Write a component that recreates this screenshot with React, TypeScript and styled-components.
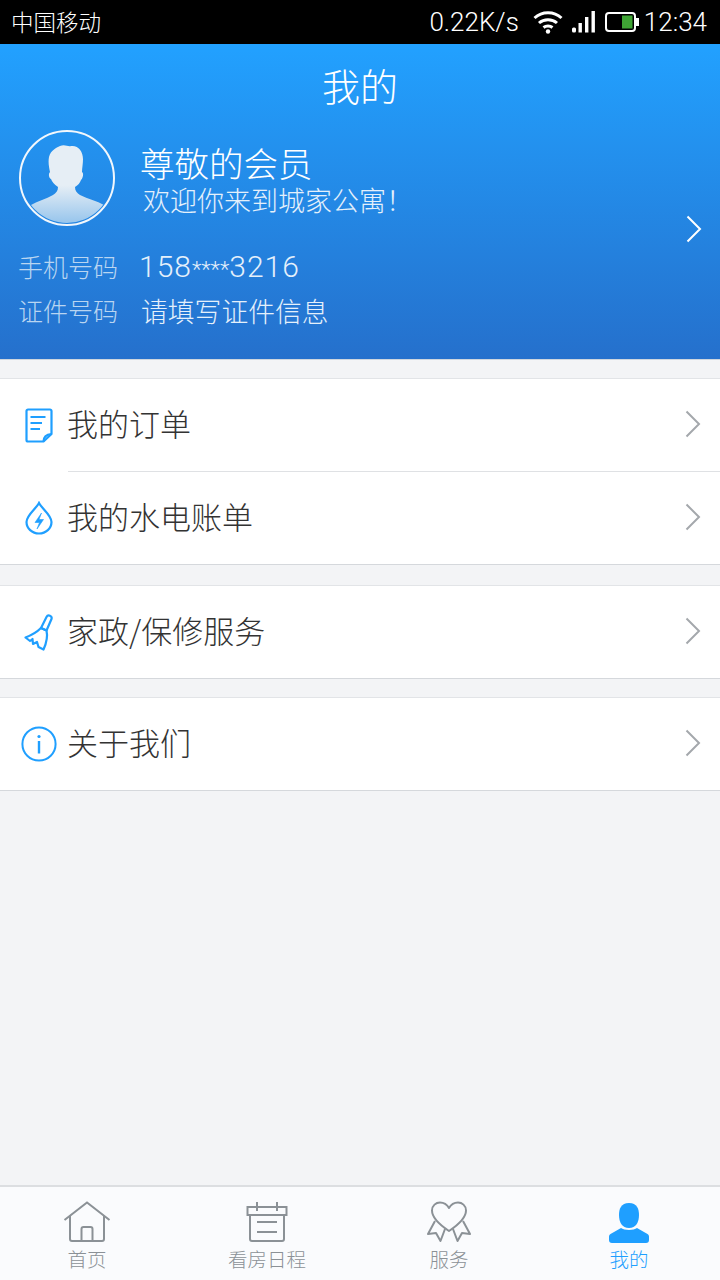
import { FC, ReactNode } from 'react'
import styled, { createGlobalStyle } from 'styled-components'

const GlobalStyle = createGlobalStyle`
  html, body {
    margin: 0;
    padding: 0;
    background: #f3f4f6;
  }
  * {
    box-sizing: border-box;
  }
`

const FONT = `"Noto Sans CJK SC", "Noto Sans", sans-serif`

const ChevronRight: FC<{ color: string }> = ({ color }) => (
  <svg width="16" height="28" viewBox="0 0 16 28" fill="none">
    <path d="M1.5 1.5 L14 14 L1.5 26.5" stroke={color} strokeWidth="2" />
  </svg>
)

const OrderIcon = () => (
  <svg width="28" height="35" viewBox="0 0 28 35" fill="none" stroke="#1f9fff" strokeWidth="2.2" strokeLinejoin="round">
    <path d="M3 1.5 H25 A1.5 1.5 0 0 1 26.5 3 V26 L18.5 33.5 H3 A1.5 1.5 0 0 1 1.5 32 V3 A1.5 1.5 0 0 1 3 1.5 Z" />
    <path d="M18.5 33.5 C18.5 29 21 26.5 26.5 26" />
    <path d="M5.5 9 H20.5 M5.5 15 H17 M5.5 21 H15" />
  </svg>
)

const WaterIcon = () => (
  <svg width="28" height="34" viewBox="0 0 28 34" fill="none" stroke="#1f9fff" strokeWidth="2.2">
    <path d="M14 2 C17 8 26.5 14 26.5 21 A12.5 11.5 0 0 1 1.5 21 C1.5 14 11 8 14 2 Z" />
    <path d="M16.5 12 L10 21.5 H14.5 L12 28 L18.5 18.5 H14 Z" fill="#1f9fff" strokeWidth="0.6" />
  </svg>
)

const BroomIcon = () => (
  <svg width="30" height="37" viewBox="0 0 30 37" fill="none" stroke="#1f9fff" strokeWidth="2.2" strokeLinejoin="round">
    <path d="M22.5 3 A2.7 2.7 0 0 1 27.5 5 L22.5 16.5 L17 14 Z" />
    <path d="M17 14 C13 18 8 21 1.5 23.5 L6 27 L8.5 25 L9 30 L13 28 L14.5 33 L19.5 35.5 C22 30 24 23 22.5 16.5 Z" />
  </svg>
)

const InfoIcon = () => (
  <svg width="36" height="36" viewBox="0 0 36 36" fill="none">
    <circle cx="18" cy="18" r="16.6" stroke="#1f9fff" strokeWidth="2" />
    <circle cx="18" cy="10.5" r="1.6" fill="#1f9fff" />
    <rect x="16.8" y="15" width="2.4" height="12.5" fill="#1f9fff" />
  </svg>
)

const HomeIcon = () => (
  <svg width="48" height="42" viewBox="0 0 48 42" fill="none" stroke="#8b9196" strokeWidth="2">
    <path d="M1.5 19 L24 1.5 L46.5 19" />
    <path d="M7 15 V38 A2 2 0 0 0 9 40 H39 A2 2 0 0 0 41 38 V15" />
    <path d="M18.5 40 V28 A2 2 0 0 1 20.5 26 H27.5 A2 2 0 0 1 29.5 28 V40" />
  </svg>
)

const CalendarIcon = () => (
  <svg width="42" height="42" viewBox="0 0 42 42" fill="none" stroke="#8b9196" strokeWidth="2">
    <path d="M1.5 6 H40.5 V14 H1.5 Z" />
    <path d="M4 14 V38 A2 2 0 0 0 6 40 H36 A2 2 0 0 0 38 38 V14" />
    <path d="M11 1 V10 M31 1 V10" />
    <path d="M11 21 H31 M11 31 H31" />
  </svg>
)

const RibbonIcon = () => (
  <svg width="44" height="42" viewBox="0 0 44 42" fill="none" stroke="#8b9196" strokeWidth="2" strokeLinejoin="round">
    <path d="M22 30 C16 26 5 18 5 9.5 C5 4.5 9 1.5 13 1.5 C17 1.5 20 3.5 22 7 C24 3.5 27 1.5 31 1.5 C35 1.5 39 4.5 39 9.5 C39 18 28 26 22 30 Z" />
    <path d="M8 20 L1 33 L9 32 L13.5 40 L18 28" />
    <path d="M36 20 L43 33 L35 32 L30.5 40 L26 28" />
  </svg>
)

const UserIcon = () => (
  <svg width="40" height="40" viewBox="0 0 40 40" fill="#1f9fff">
    <path d="M20 0 C28 0 30 6 30 12 C30 19 27 25 20 25 C13 25 10 19 10 12 C10 6 12 0 20 0 Z" />
    <path d="M12 25 C15 27.5 25 27.5 28 25 L38.5 31 A3 3 0 0 1 40 33.5 V37 A3 3 0 0 1 37 40 H3 A3 3 0 0 1 0 37 V33.5 A3 3 0 0 1 1.5 31 Z" />
  </svg>
)

const AvatarFigure = () => (
  <svg width="90" height="90" viewBox="0 0 90 90">
    <defs>
      <linearGradient id="figure" x1="0" y1="0" x2="0" y2="1">
        <stop offset="0.5" stopColor="#e6eef5" />
        <stop offset="1" stopColor="#93c3ec" />
      </linearGradient>
      <clipPath id="disc">
        <circle cx="45" cy="45" r="45" />
      </clipPath>
    </defs>
    <path
      clipPath="url(#disc)"
      fill="url(#figure)"
      d="M27 24 C29 17 34 15 38 13 C43 11 46 14 49 13 C56 12 61 18 61 26 C61 31 60 35 60 39 C62 40 61 45 59 47 C58 50 56 52 53 54 C53 58 55 60 58 62 C66 66 75 68 82 72 L84 92 L6 92 L9 72 C16 68 24 66 31 62 C34 60 36 58 36 54 C32 51 30 49 29 46 C27 45 26 41 28 39 C27 34 26 29 27 24 Z"
    />
  </svg>
)

const WifiIcon = () => (
  <svg width="30" height="24" viewBox="0 0 30 24" fill="none" stroke="#fff" strokeWidth="3">
    <path d="M1.5 8 C9 1 21 1 28.5 8" />
    <path d="M6 13 C11 8.5 19 8.5 24 13" />
    <path d="M10.5 17.5 C13 15.5 17 15.5 19.5 17.5" />
    <circle cx="15" cy="21.5" r="2.2" fill="#fff" stroke="none" />
  </svg>
)

const SignalIcon = () => (
  <svg width="24" height="22" viewBox="0 0 24 22" fill="#fff">
    <rect x="0" y="16.5" width="4" height="5" rx="1.5" />
    <rect x="6.5" y="12" width="3.4" height="9.5" />
    <rect x="13" y="6" width="3.4" height="15.5" />
    <rect x="19.5" y="0" width="3.4" height="21.5" />
  </svg>
)

const BatteryIcon = () => (
  <svg width="34" height="20" viewBox="0 0 34 20" fill="none">
    <rect x="1" y="1" width="29" height="18" rx="3" stroke="#fff" strokeWidth="2" />
    <rect x="17" y="3.5" width="10.5" height="13" fill="#3fa535" />
    <rect x="31" y="6" width="3" height="8" fill="#fff" />
  </svg>
)

const Page = styled.div`
  width: 720px;
  height: 1280px;
  display: flex;
  flex-direction: column;
  background: #f3f4f6;
  font-family: ${FONT};
  overflow: hidden;
`

const StatusBar = styled.div`
  height: 44px;
  flex: none;
  background: #000;
  color: #fff;
  display: flex;
  align-items: center;
  padding: 0 13px 0 11px;
`

const Carrier = styled.span`
  font-size: 22.5px;
  font-weight: 300;
  flex: 1;
  padding-bottom: 3px;
`

const StatusText = styled.span`
  font-family: 'Roboto', sans-serif;
  font-size: 26px;
  font-weight: 300;
`

const StatusIcons = styled.div`
  display: flex;
  align-items: center;
  gap: 9px;
  margin: 0 5px 0 14px;
`

const Header = styled.header`
  height: 316px;
  flex: none;
  background: linear-gradient(180deg, #22a1ff 0%, #2570cc 100%);
  border-bottom: 1px solid #cfd6de;
  color: #fff;
  display: flex;
  flex-direction: column;
  padding-top: 14px;
`

const Title = styled.h1`
  margin: 0;
  height: 54px;
  line-height: 54px;
  text-align: center;
  font-size: 38px;
  font-weight: 300;
`

const HeaderBody = styled.div`
  display: flex;
  align-items: center;
  justify-content: space-between;
  padding: 0 18px 0 19px;
`

const HeaderArrow = styled.div`
  display: flex;
  margin-top: 14px;
`

const ProfileColumn = styled.div`
  display: flex;
  flex-direction: column;
  padding-top: 18px;
`

const ProfileTop = styled.div`
  display: flex;
  align-items: center;
  gap: 25px;
`

const Avatar = styled.div`
  width: 96px;
  height: 96px;
  border-radius: 50%;
  border: 2px solid #f2f7fc;
  padding: 1px;
  overflow: hidden;
`

const Names = styled.div`
  display: flex;
  flex-direction: column;
  padding-top: 4px;
`

const MemberName = styled.div`
  font-size: 34.5px;
  line-height: 40px;
  font-weight: 300;
`

const Welcome = styled.div`
  font-size: 27px;
  line-height: 36px;
  font-weight: 300;
  margin-left: 3px;
  color: #e4f0fb;
`

const InfoRows = styled.div`
  display: flex;
  flex-direction: column;
  margin-top: 18px;
`

const InfoRow = styled.div`
  display: flex;
  align-items: center;
  height: 44px;
`

const InfoLabel = styled.span`
  width: 124px;
  margin-left: -1px;
  font-size: 25px;
  font-weight: 300;
  color: #b9d5f1;
`

const InfoValue = styled.span<{ $latin?: boolean }>`
  font-family: ${(p) => (p.$latin ? `'Roboto', sans-serif` : FONT)};
  font-size: ${(p) => (p.$latin ? 30 : 26.8)}px;
  font-weight: 300;
  letter-spacing: ${(p) => (p.$latin ? 1 : 0)}px;
  margin-left: ${(p) => (p.$latin ? -3 : -1)}px;
  color: #e4f0fb;
`

const Mask = styled.span`
  font-size: 22px;
  letter-spacing: 0;
`

const Content = styled.main`
  flex: 1;
  display: flex;
  flex-direction: column;
  padding-top: 18px;
  gap: 20px;
`

const Group = styled.section<{ $tight?: boolean }>`
  background: #fff;
  border-top: 1px solid #e2e4e7;
  border-bottom: 1px solid #d5d8dc;
  margin-top: ${(p) => (p.$tight ? -2 : 0)}px;
`

const Row = styled.div`
  height: 92px;
  display: flex;
  align-items: center;
  padding-right: 19px;
`

const IconSlot = styled.div`
  width: 67px;
  flex: none;
  display: flex;
  justify-content: center;
  padding-left: 11px;
`

const RowText = styled.div`
  flex: 1;
  font-size: 31px;
  font-weight: 300;
  color: #333;
  align-self: stretch;
  display: flex;
  align-items: center;
  padding-bottom: 5px;
`

const RowArrow = styled.div`
  display: flex;
  margin-bottom: 2px;
`

const Divider = styled.div`
  height: 1px;
  margin-left: 68px;
  background: #dfe1e4;
`

const TabBar = styled.nav`
  height: 95px;
  flex: none;
  background: #fafbfd;
  border-top: 2px solid #dcdee1;
  display: grid;
  grid-template-columns: 174px 186px 178px 182px;
`

const Tab = styled.div<{ $active?: boolean }>`
  display: flex;
  flex-direction: column;
  align-items: center;
  padding-top: 14px;
  color: ${(p) => (p.$active ? '#1f9fff' : '#8b9196')};
  font-size: 19.5px;
  font-weight: 300;
`

const TabIcon = styled.div`
  height: 42px;
  display: flex;
  align-items: flex-end;
`

const TabLabel = styled.span`
  line-height: 26px;
  margin-top: 3px;
`

type MenuRowProps = { icon: ReactNode; label: string }

const MenuRow: FC<MenuRowProps> = ({ icon, label }) => (
  <Row>
    <IconSlot>{icon}</IconSlot>
    <RowText>{label}</RowText>
    <RowArrow>
      <ChevronRight color="#a4a8ac" />
    </RowArrow>
  </Row>
)

export default function App() {
  return (
    <Page>
      <GlobalStyle />
      <StatusBar>
        <Carrier>中国移动</Carrier>
        <StatusText>0.22K/s</StatusText>
        <StatusIcons>
          <WifiIcon />
          <SignalIcon />
          <BatteryIcon />
        </StatusIcons>
        <StatusText>12:34</StatusText>
      </StatusBar>

      <Header>
        <Title>我的</Title>
        <HeaderBody>
          <ProfileColumn>
            <ProfileTop>
              <Avatar>
                <AvatarFigure />
              </Avatar>
              <Names>
                <MemberName>尊敬的会员</MemberName>
                <Welcome>欢迎你来到城家公寓！</Welcome>
              </Names>
            </ProfileTop>
            <InfoRows>
              <InfoRow>
                <InfoLabel>手机号码</InfoLabel>
                <InfoValue $latin>
                  158<Mask>****</Mask>3216
                </InfoValue>
              </InfoRow>
              <InfoRow>
                <InfoLabel>证件号码</InfoLabel>
                <InfoValue>请填写证件信息</InfoValue>
              </InfoRow>
            </InfoRows>
          </ProfileColumn>
          <HeaderArrow>
            <ChevronRight color="#ffffff" />
          </HeaderArrow>
        </HeaderBody>
      </Header>

      <Content>
        <Group>
          <MenuRow icon={<OrderIcon />} label="我的订单" />
          <Divider />
          <MenuRow icon={<WaterIcon />} label="我的水电账单" />
        </Group>
        <Group>
          <MenuRow icon={<BroomIcon />} label="家政/保修服务" />
        </Group>
        <Group $tight>
          <MenuRow icon={<InfoIcon />} label="关于我们" />
        </Group>
      </Content>

      <TabBar>
        <Tab>
          <TabIcon><HomeIcon /></TabIcon>
          <TabLabel>首页</TabLabel>
        </Tab>
        <Tab>
          <TabIcon><CalendarIcon /></TabIcon>
          <TabLabel>看房日程</TabLabel>
        </Tab>
        <Tab>
          <TabIcon><RibbonIcon /></TabIcon>
          <TabLabel>服务</TabLabel>
        </Tab>
        <Tab $active>
          <TabIcon><UserIcon /></TabIcon>
          <TabLabel>我的</TabLabel>
        </Tab>
      </TabBar>
    </Page>
  )
}
